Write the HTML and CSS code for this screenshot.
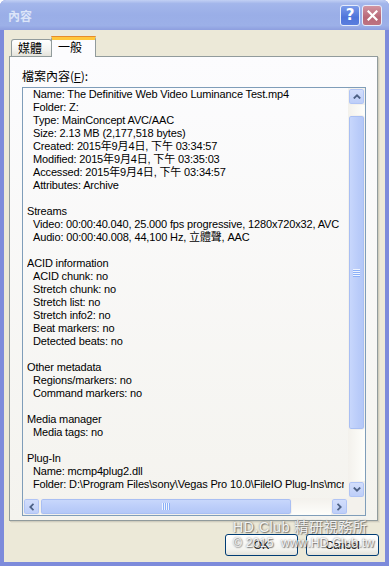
FILE: index.html
```html
<!DOCTYPE html>
<html lang="zh-Hant">
<head>
  <meta charset="UTF-8" />
  <title>內容</title>
  <meta name="viewport" content="width=device-width, initial-scale=1.0" />
  <link rel="stylesheet" href="styles.css">
</head>
<body>

<div class="window">
  <div class="titlebar">
    <span class="title">內容</span>
    <span class="tb-btn help">?</span>
    <span class="tb-btn close">
      <svg width="11" height="11" viewBox="0 0 11 11"><path d="M1.5 1.5 L9.5 9.5 M9.5 1.5 L1.5 9.5" stroke="#fff" stroke-width="2.2" stroke-linecap="square"/></svg>
    </span>
  </div>

  <div class="client">
    <div class="tabs">
      <div class="tab">媒體</div>
      <div class="tab active">一般</div>
    </div>

    <div class="panel">
      <div class="label">檔案內容(<u>F</u>):</div>
      <div class="textbox">
        <div class="tb-main">
          <div class="content">
            <div class="item">Name: The Definitive Web Video Luminance Test.mp4</div>
            <div class="item">Folder: Z:</div>
            <div class="item">Type: MainConcept AVC/AAC</div>
            <div class="item">Size: 2.13 MB (2,177,518 bytes)</div>
            <div class="item">Created: 2015年9月4日, 下午 03:34:57</div>
            <div class="item">Modified: 2015年9月4日, 下午 03:35:03</div>
            <div class="item">Accessed: 2015年9月4日, 下午 03:34:57</div>
            <div class="item">Attributes: Archive</div>
            <div class="blank"></div>
            <div class="sec">Streams</div>
            <div class="item">Video: 00:00:40.040, 25.000 fps progressive, 1280x720x32, AVC</div>
            <div class="item">Audio: 00:00:40.008, 44,100 Hz, 立體聲, AAC</div>
            <div class="blank"></div>
            <div class="sec">ACID information</div>
            <div class="item">ACID chunk: no</div>
            <div class="item">Stretch chunk: no</div>
            <div class="item">Stretch list: no</div>
            <div class="item">Stretch info2: no</div>
            <div class="item">Beat markers: no</div>
            <div class="item">Detected beats: no</div>
            <div class="blank"></div>
            <div class="sec">Other metadata</div>
            <div class="item">Regions/markers: no</div>
            <div class="item">Command markers: no</div>
            <div class="blank"></div>
            <div class="sec">Media manager</div>
            <div class="item">Media tags: no</div>
            <div class="blank"></div>
            <div class="sec">Plug-In</div>
            <div class="item">Name: mcmp4plug2.dll</div>
            <div class="item">Folder: D:\Program Files\sony\Vegas Pro 10.0\FileIO Plug-Ins\mcmp4plug2</div>
          </div>
          <div class="vscroll">
            <div class="arrow">
              <svg width="8" height="5" viewBox="0 0 8 5"><path d="M0.8 4.5 L4 1.3 L7.2 4.5" fill="none" stroke="#4D6185" stroke-width="1.8"/></svg>
            </div>
            <div class="track">
              <div class="thumb v-thumb"><span class="grip"></span></div>
            </div>
            <div class="arrow">
              <svg width="8" height="5" viewBox="0 0 8 5"><path d="M0.8 0.5 L4 3.7 L7.2 0.5" fill="none" stroke="#4D6185" stroke-width="1.8"/></svg>
            </div>
          </div>
        </div>
        <div class="tb-bottom">
          <div class="hscroll">
            <div class="arrow">
              <svg width="5" height="8" viewBox="0 0 5 8"><path d="M4.5 0.8 L1.3 4 L4.5 7.2" fill="none" stroke="#4D6185" stroke-width="1.8"/></svg>
            </div>
            <div class="track">
              <div class="thumb h-thumb"><span class="grip"></span></div>
            </div>
            <div class="arrow">
              <svg width="5" height="8" viewBox="0 0 5 8"><path d="M0.5 0.8 L3.7 4 L0.5 7.2" fill="none" stroke="#4D6185" stroke-width="1.8"/></svg>
            </div>
          </div>
          <div class="corner"></div>
        </div>
      </div>
    </div>

    <div class="buttons">
      <button class="btn">OK</button>
      <button class="btn">Cancel</button>
    </div>
  </div>

  <div class="watermark">
    <div class="wm1">HD.Club 精研視務所</div>
    <div class="wm2">© 2015&nbsp; www.HD.Club.tw</div>
  </div>
</div>

</body>
</html>
```

FILE: styles.css
```css
* { box-sizing: border-box; margin: 0; padding: 0; }
body {
  font-family: "Liberation Sans", "Noto Sans CJK TC", sans-serif;
  font-size: 11px;
  background: #fff;
  color: #000;
}
.window {
  position: relative;
  width: 389px;
  height: 566px;
  display: flex;
  flex-direction: column;
  background: #7D8BDB;
  border-radius: 6px 6px 0 0;
  overflow: hidden;
}

/* title bar */
.titlebar {
  height: 30px;
  flex: none;
  display: flex;
  align-items: center;
  gap: 2px;
  padding: 0 7px 0 8px;
  background: linear-gradient(to bottom, #C2D0F4 0%, #A3B6EB 12%, #9AAEE7 50%, #9CB0E8 85%, #8E9FDF 100%);
}
.title {
  flex: 1;
  color: #DCE5F8;
  font-family: "Noto Sans CJK TC", sans-serif;
  font-weight: bold;
  font-size: 12px;
}
.tb-btn {
  width: 20px;
  height: 21px;
  border-radius: 3px;
  border: 1px solid #E6ECFB;
  display: flex;
  align-items: center;
  justify-content: center;
  color: #fff;
}
.help {
  background: linear-gradient(to bottom, #7B9BEA, #4F74DA 60%, #5A7EDE);
  font-family: "DejaVu Sans", sans-serif;
  font-weight: bold;
  font-size: 15px;
}
.close {
  background: linear-gradient(to bottom, #D295A2, #B86877 60%, #BE7381);
}

/* client area */
.client {
  flex: 1;
  margin: 0 4px 4px;
  background: #ECE9D8;
  padding: 6px 0 0 5px;
  display: flex;
  flex-direction: column;
}
.tabs {
  display: flex;
  align-items: flex-end;
  height: 21px;
  margin-left: 2px;
  margin-bottom: -1px;
  position: relative;
  z-index: 1;
}
.tab {
  font-family: "Noto Sans CJK TC", sans-serif;
  font-size: 12px;
  height: 17px;
  width: 41px;
  margin-bottom: 1px;
  line-height: 16px;
  padding-left: 6px;
  border: 1px solid #919B9C;
  border-bottom: none;
  border-radius: 3px 3px 0 0;
  background: linear-gradient(to bottom, #FFFFFF, #F3F3EF 60%, #E4E3DB);
}
.tab.active {
  height: 21px;
  width: 45px;
  margin-left: -1px;
  margin-bottom: 0;
  padding-left: 6px;
  line-height: 16px;
  background: #FCFCFE;
  border-top: 3px solid #FFC73C;
  box-shadow: inset 0 1px 0 #FFC73C;
  position: relative;
}
.tab.active::before {
  content: "";
  position: absolute;
  left: -1px;
  right: -1px;
  top: -3px;
  height: 1px;
  background: #E68B2C;
  border-radius: 3px 3px 0 0;
}
.panel {
  width: 369px;
  height: 465px;
  border: 1px solid #919B9C;
  background: linear-gradient(to bottom, #FCFCFE, #F4F3EE);
  box-shadow: 1px 1px 0 #D0CDBE, 2px 2px 0 #E2DFCF;
  padding: 12px 0 0 12px;
}
.label {
  line-height: 13px;
  font-family: "Noto Sans CJK TC", sans-serif;
  font-size: 12px;
}
.label u { font-family: "Liberation Sans", sans-serif; font-size: 11px; }
.textbox {
  margin-top: 3px;
  width: 344px;
  height: 429px;
  border: 1px solid #7F9DB9;
  display: flex;
  flex-direction: column;
}
.tb-main {
  flex: 1;
  display: flex;
  min-height: 0;
}
.content {
  flex: 1;
  overflow: hidden;
  margin: 0 4px 0 4px;
  white-space: nowrap;
  line-height: 13px;
  letter-spacing: -0.15px;
}
.item { padding-left: 6px; }
.blank { height: 13px; }

/* scrollbars */
.vscroll {
  width: 17px;
  display: flex;
  flex-direction: column;
  background: #F3F1EC;
}
.hscroll {
  flex: 1;
  display: flex;
  background: #F3F1EC;
}
.tb-bottom {
  height: 17px;
  display: flex;
}
.corner {
  width: 17px;
  background: #F3F1EC;
}
.arrow {
  width: 17px;
  height: 17px;
  flex: none;
  border: 1px solid #F3F1EC;
  border-radius: 3px;
  background: linear-gradient(to bottom, #D4DFFC, #BCCDF8);
  box-shadow: inset 0 0 0 1px #B0C4F5;
  display: flex;
  align-items: center;
  justify-content: center;
}
.track {
  flex: 1;
  display: flex;
  background: linear-gradient(to right, #F3F1EC, #FEFEFB);
}
.vscroll .track {
  flex-direction: column;
  padding-top: 10px;
}
.hscroll .track {
  background: linear-gradient(to bottom, #F3F1EC, #FEFEFB);
}
.thumb {
  border: 1px solid #F3F1EC;
  border-radius: 3px;
  box-shadow: inset 0 0 0 1px #A9BFF3;
  display: flex;
  align-items: center;
  justify-content: center;
}
.v-thumb {
  width: 17px;
  height: 315px;
  background: linear-gradient(to right, #C9D8FC, #BACCF9 60%, #B3C7F7);
}
.h-thumb {
  width: 252px;
  height: 17px;
  background: linear-gradient(to bottom, #C9D8FC, #BACCF9 60%, #B3C7F7);
}
.v-thumb .grip {
  width: 7px;
  height: 8px;
  background: repeating-linear-gradient(to bottom, #EEF4FE 0, #EEF4FE 1px, #8CB0F8 1px, #8CB0F8 2px);
}
.h-thumb .grip {
  width: 8px;
  height: 7px;
  background: repeating-linear-gradient(to right, #EEF4FE 0, #EEF4FE 1px, #8CB0F8 1px, #8CB0F8 2px);
}

/* buttons */
.buttons {
  display: flex;
  justify-content: flex-end;
  gap: 8px;
  margin-top: 13px;
  padding-right: 6px;
}
.btn {
  width: 73px;
  height: 22px;
  border: 1px solid #003C74;
  border-radius: 3px;
  background: linear-gradient(to bottom, #FFFFFF, #F4F4F0 70%, #E3E2DA);
  font-family: "Liberation Sans", sans-serif;
  font-size: 11px;
  color: #000;
}

/* watermark overlay */
.watermark {
  position: absolute;
  left: 233px;
  top: 519px;
  color: rgba(255, 255, 255, 0.9);
  text-shadow: 0 0 2px rgba(90, 90, 90, 0.8), 1px 1px 1px rgba(60, 60, 60, 0.6);
  font-family: "Liberation Sans", "Noto Sans CJK TC", sans-serif;
  white-space: nowrap;
}
.wm1 {
  font-size: 14px;
  line-height: 17px;
  letter-spacing: 0.6px;
}
.wm2 {
  font-size: 12px;
  line-height: 15px;
  letter-spacing: 0.3px;
}
```
